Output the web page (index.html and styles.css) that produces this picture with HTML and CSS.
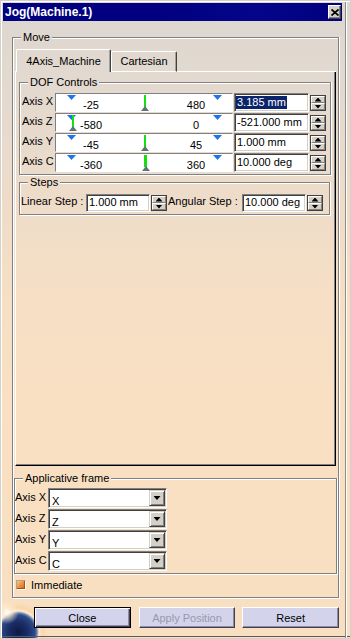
FILE: index.html
```html
<!DOCTYPE html>
<html lang="en">
<head>
<meta charset="utf-8">
<title>Jog(Machine.1)</title>
<link rel="stylesheet" href="styles.css">
</head>
<body>
<div class="window">
  <div class="titlebar">
    <span class="title">Jog(Machine.1)</span>
    <span class="caption-btn">
      <svg width="8" height="7" viewBox="0 0 8 7"><path d="M0.5 0.5 L7.5 6.5 M7.5 0.5 L0.5 6.5" stroke="#000" stroke-width="1.7" fill="none"/></svg>
    </span>
  </div>
  <div class="client">
    <div class="group move">
      <div class="group-head"><span class="legend">Move</span></div>
      <div class="group-body move-body">
        <div class="tabstrip">
          <div class="tab active">4Axis_Machine</div>
          <div class="tab cart">Cartesian</div>
        </div>
        <div class="tabpanel">
          <div class="group dof">
            <div class="group-head"><span class="legend">DOF Controls</span></div>
            <div class="group-body dof-body">
              <div class="dof-row">
                <span class="row-label">Axis X</span>
                <div class="slider">
                  <span class="mark mark-min"></span>
                  <span class="mark mark-max"></span>
                  <span class="cursor at-mid"></span>
                  <span class="range"><span>-25</span><span>480</span></span>
                </div>
                <div class="field value"><span class="sel">3.185 mm</span></div>
                <div class="spin"><span class="up"></span><span class="down"></span></div>
              </div>
              <div class="dof-row">
                <span class="row-label">Axis Z</span>
                <div class="slider">
                  <span class="mark mark-min"></span>
                  <span class="mark mark-max"></span>
                  <span class="cursor at-min"></span>
                  <span class="range"><span>-580</span><span>0</span></span>
                </div>
                <div class="field value">-521.000 mm</div>
                <div class="spin"><span class="up"></span><span class="down"></span></div>
              </div>
              <div class="dof-row">
                <span class="row-label">Axis Y</span>
                <div class="slider">
                  <span class="mark mark-min"></span>
                  <span class="mark mark-max"></span>
                  <span class="cursor at-mid"></span>
                  <span class="range"><span>-45</span><span>45</span></span>
                </div>
                <div class="field value">1.000 mm</div>
                <div class="spin"><span class="up"></span><span class="down"></span></div>
              </div>
              <div class="dof-row">
                <span class="row-label">Axis C</span>
                <div class="slider">
                  <span class="mark mark-min"></span>
                  <span class="mark mark-max"></span>
                  <span class="cursor at-mid thick"></span>
                  <span class="range"><span>-360</span><span>360</span></span>
                </div>
                <div class="field value">10.000 deg</div>
                <div class="spin"><span class="up"></span><span class="down"></span></div>
              </div>
            </div>
          </div>
          <div class="group steps">
            <div class="group-head"><span class="legend">Steps</span></div>
            <div class="group-body steps-body">
              <span class="step-label lin">Linear Step :</span>
              <div class="field step">1.000 mm</div>
              <div class="spin"><span class="up"></span><span class="down"></span></div>
              <span class="step-label ang">Angular Step :</span>
              <div class="field step">10.000 deg</div>
              <div class="spin"><span class="up"></span><span class="down"></span></div>
            </div>
          </div>
        </div>
        <div class="group frame">
          <div class="group-head"><span class="legend">Applicative frame</span></div>
          <div class="group-body frame-body">
            <div class="combo-row"><span class="combo-label">Axis X</span><div class="combo"><span class="combo-text">X</span><span class="dd"></span></div></div>
            <div class="combo-row"><span class="combo-label">Axis Z</span><div class="combo"><span class="combo-text">Z</span><span class="dd"></span></div></div>
            <div class="combo-row"><span class="combo-label">Axis Y</span><div class="combo"><span class="combo-text">Y</span><span class="dd"></span></div></div>
            <div class="combo-row"><span class="combo-label">Axis C</span><div class="combo"><span class="combo-text">C</span><span class="dd"></span></div></div>
          </div>
        </div>
        <div class="check-row"><span class="checkbox"></span><span>Immediate</span></div>
      </div>
    </div>
    <div class="buttons">
      <div class="btn default">Close</div>
      <div class="btn disabled">Apply Position</div>
      <div class="btn reset">Reset</div>
    </div>
  </div>
</div>
</body>
</html>
```

FILE: styles.css
```css
* { box-sizing: border-box; }
html, body { margin: 0; padding: 0; }
body {
  font-family: "Liberation Sans", Arial, sans-serif;
  font-size: 11px;
  line-height: 12px;
  color: #000;
  background: #f9e0c2;
}

.window {
  width: 351px;
  height: 639px;
  display: flex;
  flex-direction: column;
  border: 1px solid #d4d0c8;
  padding: 2px 8px 2px 2px;
  box-shadow: inset 1px 1px 0 #fff;
  background:
    linear-gradient(to left, transparent 4px, #fff 4px, #fff 5px, #8c8c8c 5px, #8c8c8c 6px, transparent 6px),
    linear-gradient(to top, transparent 2px, #5a5a5a 2px, #5a5a5a 3px, transparent 3px),
    radial-gradient(circle at 7px 612px, rgba(255,255,255,0.95) 0, rgba(255,236,205,0.7) 5px, rgba(255,215,160,0) 12px),
    radial-gradient(circle at 18px 632px, #0e1a44 0, #1a2d66 10px, #2c4a88 17px, #7083b0 19px, #fbecd4 21px, rgba(250,210,160,0.7) 24px, rgba(249,224,195,0) 30px),
    linear-gradient(180deg, #ddd7d0 0, #e3d9cf 90px, #eedcc9 200px, #f6dfc5 300px, #f9e0c3 400px, #f9dfc1 639px);
  background-origin: border-box;
}

/* title bar */
.titlebar {
  flex: none;
  height: 18px;
  display: flex;
  align-items: center;
  justify-content: space-between;
  padding: 0 1px 0 2px;
  background: linear-gradient(90deg, #000080 0, #000080 45%, #05058a 75%, #000080 100%);
  color: #fff;
  font-weight: bold;
  font-size: 12px;
  line-height: 14px;
}
.caption-btn {
  width: 13px;
  height: 14px;
  display: flex;
  align-items: center;
  justify-content: center;
  background: #d4d0c8;
  border: 1px solid;
  border-color: #fff #404040 #404040 #fff;
  box-shadow: inset -1px -1px 0 #808080;
}

.client {
  flex: 1;
  display: flex;
  flex-direction: column;
  padding: 10px 3px 0 9px;
}

/* etched group box */
.group { display: flex; flex-direction: column; flex: none; }
.group-head { display: flex; height: 12px; }
.group-head::before {
  content: "";
  width: 8px;
  height: 6px;
  margin-top: 6px;
  border-top: 1px solid #808080;
  border-left: 1px solid #808080;
  box-shadow: inset 1px 1px 0 #fff;
}
.group-head::after {
  content: "";
  flex: 1;
  height: 6px;
  margin-top: 6px;
  border-top: 1px solid #808080;
  border-right: 1px solid #808080;
  box-shadow: inset 0 1px 0 #fff, 1px 0 0 #fff;
}
.legend { padding: 0 2px; white-space: nowrap; }
.group-body {
  border: 1px solid #808080;
  border-top: none;
  box-shadow: inset 1px 0 0 #fff, 1px 1px 0 #fff;
}

.move-body {
  display: flex;
  flex-direction: column;
  padding: 6px 1px 6px 1px;
}

/* tabs */
.tabstrip {
  display: flex;
  align-items: flex-end;
  height: 23px;
  margin: 0 1px;
}
.tabstrip::before { content: ""; width: 1px; height: 1px; background: #fff; }
.tabstrip::after { content: ""; flex: 1; height: 1px; background: #fff; }
.tab {
  height: 21px;
  padding-top: 3px;
  text-align: center;
  border: 1px solid;
  border-color: #fff #404040 #fff #fff;
  border-radius: 2px 2px 0 0;
  box-shadow: inset -1px 0 0 #a0a0a0;
  white-space: nowrap;
}
.tab.active {
  width: 95px;
  height: 23px;
  padding-top: 5px;
  border-bottom: none;
}
.tab.cart { width: 66px; }

.tabpanel {
  height: 394px;
  margin: 0 1px;
  display: flex;
  flex-direction: column;
  border-left: 1px solid #fff;
  border-right: 1px solid #000;
  border-bottom: 1px solid #000;
  box-shadow: inset -1px -1px 0 #808080;
  padding: 4px 4px 0 3px;
}

/* DOF controls */
.dof-body {
  display: flex;
  flex-direction: column;
  gap: 1px;
  padding: 5px 3px 2px 2px;
}
.dof-row { display: flex; height: 19px; }
.row-label { width: 33px; padding-top: 2px; white-space: nowrap; }

.slider {
  position: relative;
  width: 178px;
  height: 19px;
  margin-right: 1px;
  background: #fff;
  border: 1px solid;
  border-color: #808080 #fff #fff #808080;
}
.mark {
  position: absolute;
  top: 1px;
  width: 9px;
  height: 5px;
  background: #1f74ec;
  clip-path: polygon(0 0, 100% 0, 50% 100%);
}
.mark-min { left: 11px; }
.mark-max { left: 157px; }
.cursor {
  position: absolute;
  top: 1px;
  width: 2px;
  height: 12px;
  background: #12e012;
}
.cursor::after {
  content: "";
  position: absolute;
  top: 11px;
  left: -3px;
  width: 8px;
  height: 5px;
  background: #5f7474;
  clip-path: polygon(50% 0, 100% 100%, 0 100%);
}
.cursor.at-mid { left: 88px; }
.cursor.at-min { left: 16px; }
.cursor.thick { width: 3px; }
.cursor.thick::after { left: -2px; }
.range {
  display: flex;
  justify-content: space-between;
  padding: 5px 16px 0 15px;
}
.range span { width: 40px; text-align: center; }

.field {
  background: #fff;
  border: 1px solid;
  border-color: #808080 #fff #fff #808080;
  box-shadow: inset 1px 1px 0 #404040, inset -1px -1px 0 #d4d0c8;
  line-height: 13px;
  white-space: nowrap;
  overflow: hidden;
}
.field.value {
  width: 75px;
  height: 19px;
  margin-right: 1px;
  padding: 2px 0 0 2px;
}
.sel {
  display: inline-block;
  margin-left: -1px;
  padding: 0 1px 0 1px;
  background: #0a246a;
  color: #fff;
}

.spin {
  width: 16px;
  height: 16px;
  margin-top: 2px;
  display: flex;
  flex-direction: column;
  border: 1px solid #404040;
  flex: none;
}
.spin span {
  flex: 1;
  display: flex;
  align-items: center;
  justify-content: center;
  background: #d4d0c8;
  border-top: 1px solid #fff;
  border-left: 1px solid #fff;
  border-bottom: 1px solid #808080;
  border-right: 1px solid #808080;
}
.spin span::before {
  content: "";
  width: 7px;
  height: 4px;
  background: #000;
}
.spin .up::before { clip-path: polygon(50% 0, 100% 100%, 0 100%); }
.spin .down::before { clip-path: polygon(0 0, 100% 0, 50% 100%); }

/* steps */
.steps { margin-top: 1px; margin-right: 1px; }
.steps-body {
  display: flex;
  height: 27px;
  padding: 6px 0 1px 0;
}
.step-label { padding: 1px 0 0 1px; white-space: nowrap; }
.step-label.lin { width: 66px; }
.step-label.ang { width: 75px; }
.field.step {
  width: 64px;
  height: 18px;
  margin-right: 1px;
  padding: 1px 0 0 2px;
}
.steps-body .spin { margin-top: 1px; }

/* applicative frame */
.frame { margin-top: 6px; }
.frame-body {
  display: flex;
  flex-direction: column;
  gap: 1px;
  padding: 4px 0 2px 0;
}
.combo-row { display: flex; height: 20px; }
.combo-label { width: 33px; padding-top: 3px; white-space: nowrap; }
.combo {
  width: 119px;
  height: 20px;
  display: flex;
  padding: 1px;
  background: #fff;
  border: 1px solid;
  border-color: #808080 #fff #fff #808080;
  box-shadow: inset 1px 1px 0 #404040, inset -1px -1px 0 #d4d0c8;
}
.combo-text { flex: 1; padding: 5px 0 0 2px; }
.dd {
  width: 16px;
  height: 16px;
  display: flex;
  align-items: center;
  justify-content: center;
  background: #d4d0c8;
  border: 1px solid;
  border-color: #d4d0c8 #404040 #404040 #d4d0c8;
  box-shadow: inset 1px 1px 0 #fff, inset -1px -1px 0 #808080;
}
.dd::before {
  content: "";
  width: 7px;
  height: 4px;
  background: #000;
  clip-path: polygon(0 0, 100% 0, 50% 100%);
}

/* immediate */
.check-row {
  display: flex;
  align-items: center;
  gap: 5px;
  height: 12px;
  margin: 5px 0 0 2px;
}
.checkbox {
  width: 10px;
  height: 10px;
  border: 1px solid;
  border-color: #b0a090 #fff #fff #b0a090;
  background: linear-gradient(135deg, #fbc78a 0, #ee9440 45%, #c8641c 100%);
  box-shadow: inset -1px -1px 0 #a8501a;
}

/* buttons */
.buttons {
  display: flex;
  margin-top: 9px;
  padding-left: 22px;
}
.btn {
  width: 97px;
  height: 21px;
  display: flex;
  align-items: center;
  justify-content: center;
  background: #d3d3ec;
  border: 1px solid;
  border-color: #fff #404050 #404050 #fff;
  box-shadow: inset -1px -1px 0 #8c8ca4;
  white-space: nowrap;
}
.btn.default {
  border-color: #000;
  box-shadow: inset 1px 1px 0 #fff, inset -1px -1px 0 #404050, inset -2px -2px 0 #8c8ca4;
}
.btn.disabled { margin-left: 8px; color: #9a9aac; }
.btn.reset { margin-left: 7px; }
```
